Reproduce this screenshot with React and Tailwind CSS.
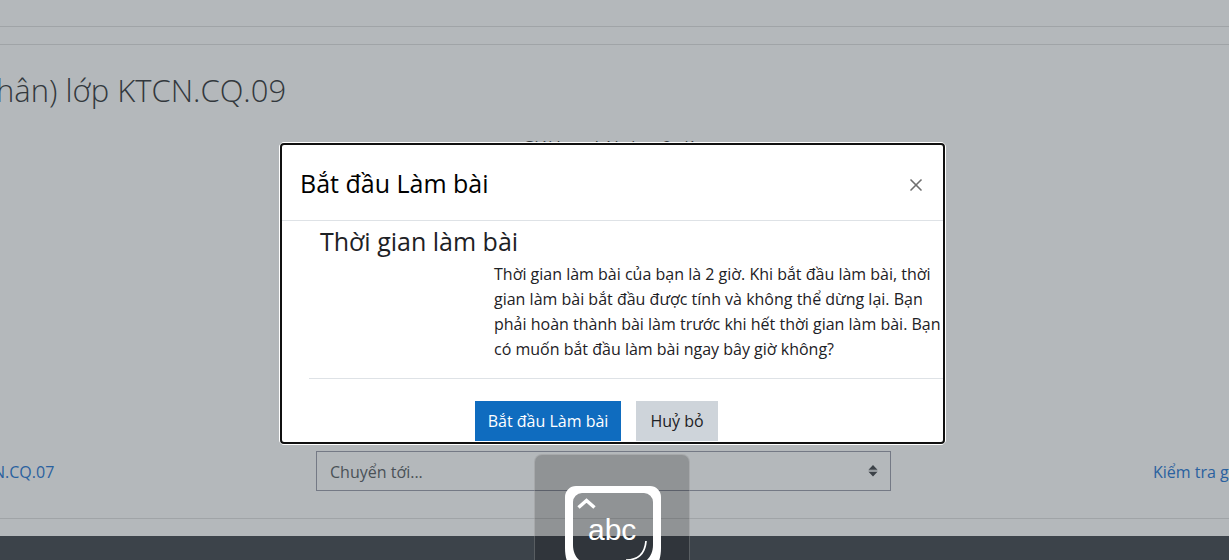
import { X } from "lucide-react";

function SortArrows() {
  return (
    <svg viewBox="0 0 10 12" className="pointer-events-none absolute right-[13px] top-[14px] h-3 w-[10px]" aria-hidden="true">
      <path d="M5 0 9.5 4.7H.5zM5 11.5.5 6.8h9z" fill="#3c4248" />
      <path d="M.5 5.8h9" stroke="#8b9094" strokeWidth="1" />
    </svg>
  );
}

function QuizPage() {
  return (
    <div className="min-h-screen overflow-hidden bg-[#b4b8bb]">
      <div className="h-[26px]" />
      <div className="h-[19px] border-y border-[#a0a4a7]" />
      <main className="flex h-[474px] flex-col justify-between border-b border-[#a0a4a7] pb-[26px] pt-[21px]">
        <div>
          <h2 className="-ml-1 text-[31px] font-light leading-[48px] text-[#33383d]">hân) lớp KTCN.CQ.09</h2>
          <p className="mt-[21px] pr-2 text-center text-base leading-6 text-[#33383d]">
            Giới hạn thời gian: 2 giờ
          </p>
        </div>
        <nav className="flex h-[42px] items-center pb-px pt-px text-base leading-6">
          <a href="#previous" className="-ml-[7px] w-[323px] whitespace-nowrap pt-px text-[#2a619f]">N.CQ.07</a>
          <div className="relative w-[575px]">
            <select
              aria-label="Chuyển tới"
              className="block h-10 w-full appearance-none border border-[#747985] bg-transparent px-[13px] pt-px text-base text-[#4a5157]"
            >
              <option>Chuyển tới...</option>
            </select>
            <SortArrows />
          </div>
          <div className="flex-1" />
          <a href="#next" className="w-[76px] overflow-hidden whitespace-nowrap pt-px text-[#2a619f]">Kiểm tra g</a>
        </nav>
      </main>
      <footer className="mt-[17px] h-10 bg-[#3c434a]" />
    </div>
  );
}

function StartAttemptDialog() {
  return (
    <div className="absolute inset-0 flex items-start justify-center pr-1 pt-[142px]">
      <section
        role="dialog"
        aria-modal="true"
        aria-labelledby="dialog-title"
        className="w-[667px] rounded-[5px] border border-white bg-white"
      >
        <div className="overflow-hidden rounded border-2 border-[#101010]">
          <header className="flex h-[76px] items-center justify-between border-b border-[#dee2e6] pl-[18px] pr-[17px]">
            <h5 id="dialog-title" className="text-[25px] leading-9 text-black">Bắt đầu Làm bài</h5>
            <button type="button" aria-label="Đóng" className="mt-1">
              <X size={20} strokeWidth={2} color="#6f6f6f" />
            </button>
          </header>
          <form className="pb-px pl-[27px]" onSubmit={(e) => e.preventDefault()}>
            <h3 className="pl-[11px] text-[25px] leading-10 text-[#1d2125]">Thời gian làm bài</h3>
            <p className="whitespace-nowrap pb-4 pl-[185px] pt-px text-base leading-[25px] text-[#1d2125]">
              Thời gian làm bài của bạn là 2 giờ. Khi bắt đầu làm bài, thời
              <br />
              gian làm bài bắt đầu được tính và không thể dừng lại. Bạn
              <br />
              phải hoàn thành bài làm trước khi hết thời gian làm bài. Bạn
              <br />
              có muốn bắt đầu làm bài ngay bây giờ không?
            </p>
            <div className="flex gap-[15px] border-t border-[#dee2e6] pl-[166px] pt-[22px]">
              <button type="submit" className="h-10 w-[146px] bg-[#0f6cbf] text-base text-white">Bắt đầu Làm bài</button>
              <button type="button" className="h-10 w-[82px] bg-[#ced4da] text-base text-[#1d2125]">Huỷ bỏ</button>
            </div>
          </form>
        </div>
      </section>
    </div>
  );
}

function CapsLockIndicator() {
  return (
    <div className="absolute left-[534px] top-[454px] flex h-[106px] w-[156px] justify-center overflow-hidden rounded-t-lg border-x border-t border-white/20 bg-black/20 pl-[2px] pt-[30px]">
      <div className="relative h-24 w-24">
        <svg viewBox="0 0 96 96" className="h-24 w-24" fill="none" stroke="#fff" aria-hidden="true">
          <path
            fill="#fff"
            stroke="none"
            fillRule="evenodd"
            d="M11 1h74a11 11 0 0 1 11 11v51c0 18-9 29-27 29H27C9 92 0 81 0 63V12A11 11 0 0 1 11 1ZM17 8a9 9 0 0 0-9 9v43c0 12 8 20 20 20h40c12 0 20-8 20-20V17a9 9 0 0 0-9-9Z"
          />
          <path d="m13.5 22.5 8-7 8 7" strokeWidth="3.5" />
          <path d="M81 56c-1 12-7 19-20 19" strokeWidth="1.7" />
        </svg>
        <span className="absolute left-[23px] top-7 font-['Liberation_Sans',sans-serif] text-[30px] leading-[34px] text-white">abc</span>
      </div>
    </div>
  );
}

export default function App() {
  return (
    <div className="relative min-h-screen overflow-hidden font-['Open_Sans','Noto_Sans',sans-serif]">
      <QuizPage />
      <StartAttemptDialog />
      <CapsLockIndicator />
    </div>
  );
}
